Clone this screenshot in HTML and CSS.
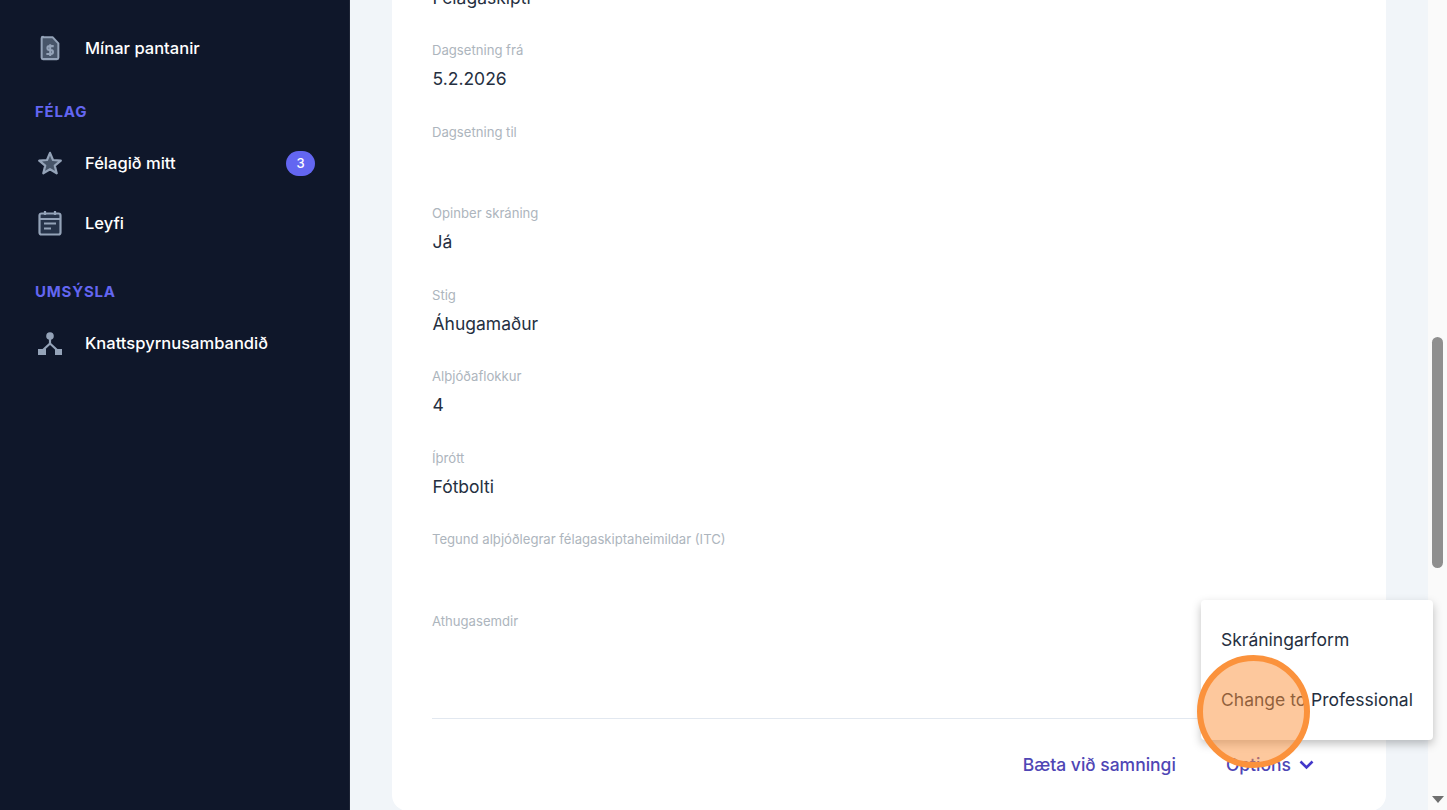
FILE: index.html
```html
<!DOCTYPE html>
<html lang="is">
<head>
    <meta charset="UTF-8">
    <meta name="viewport" content="width=device-width, initial-scale=1.0">
    <title>Félagaskipti</title>
    <link rel="stylesheet" href="styles.css">
</head>
<body>
    <!-- Hliðarvalmynd -->
    <nav class="sidebar">
        <a class="nav-item" href="#">
            <svg class="nav-icon" viewBox="0 0 24 28">
                <path class="duo" d="M4.500 2.500h10.500l6 6.500v15.500a1.500 1.500 0 0 1-1.500 1.500h-15a1.500 1.500 0 0 1-1.500-1.500v-21a1.500 1.500 0 0 1 1.500-1.500z"/>
                <path class="line" d="M16 12h-4.700a2 2 0 0 0 0 4.200h1.800a2 2 0 0 1 0 4.200h-5M12.200 10v12.500"/>
            </svg>
            <span>Mínar pantanir</span>
        </a>

        <h2 class="nav-heading first">Félag</h2>
        <a class="nav-item" href="#">
            <svg class="nav-icon" viewBox="0 0 24 24">
                <path class="duo" d="M12 1.800l3 7.200 7.800.6-6 5.100 1.900 7.600L12 18.200l-6.700 4.100 1.900-7.600-6-5.100L9 9z"/>
            </svg>
            <span>Félagið mitt</span>
            <span class="badge">3</span>
        </a>
        <a class="nav-item" href="#">
            <svg class="nav-icon" viewBox="0 0 24 26">
                <path class="duo dark" d="M3.500 3.500h17a2 2 0 0 1 2 2v17a2 2 0 0 1-2 2h-17a2 2 0 0 1-2-2v-17a2 2 0 0 1 2-2z"/>
                <path class="line" d="M2 9h20M7 1v4M17 1v4M6 13.500h12M6 18.500h7"/>
            </svg>
            <span>Leyfi</span>
        </a>

        <h2 class="nav-heading">Umsýsla</h2>
        <a class="nav-item" href="#">
            <svg class="nav-icon" viewBox="0 0 24 24">
                <circle class="solid" cx="12" cy="5" r="3.800"/>
                <rect class="solid" x="0" y="18" width="8" height="6"/>
                <rect class="solid" x="17" y="18" width="7" height="6"/>
                <path class="line" d="M12 8v4.500L5 19M12 12.500l7 6.500"/>
            </svg>
            <span>Knattspyrnusambandið</span>
        </a>
    </nav>

    <main class="content">
        <section class="card">
            <dl class="fields">
                <div class="field"><dt>Tegund</dt><dd>Félagaskipti</dd></div>
                <div class="field"><dt>Dagsetning frá</dt><dd>5.2.2026</dd></div>
                <div class="field"><dt>Dagsetning til</dt><dd></dd></div>
                <div class="field"><dt>Opinber skráning</dt><dd>Já</dd></div>
                <div class="field"><dt>Stig</dt><dd>Áhugamaður</dd></div>
                <div class="field"><dt>Alþjóðaflokkur</dt><dd>4</dd></div>
                <div class="field"><dt>Íþrótt</dt><dd>Fótbolti</dd></div>
                <div class="field"><dt>Tegund alþjóðlegrar félagaskiptaheimildar (ITC)</dt><dd></dd></div>
                <div class="field"><dt>Athugasemdir</dt><dd></dd></div>
            </dl>
            <div class="card-footer">
                <a class="action" href="#">Bæta við samningi</a>
                <a class="action options" href="#">Options
                    <svg class="chevron" viewBox="0 0 15 10"><path d="M1.500 1.500L7.500 7.500l6-6"/></svg>
                </a>
            </div>
        </section>
    </main>

    <div class="scrollbar">
        <div class="scroll-thumb"></div>
        <div class="scroll-arrow"></div>
    </div>

    <!-- Fellivalmynd yfir spjaldinu -->
    <div class="dropdown">
        <a href="#">Skráningarform</a>
        <a href="#">Change to Professional</a>
    </div>

    <div class="highlight"></div>
</body>
</html>
```

FILE: styles.css
```css
* {
    box-sizing: border-box;
}
html, body {
    height: 100%;
}
body {
    margin: 0;
    display: flex;
    height: 810px;
    overflow: hidden;
    background: #f1f5f9;
    color: #1f2937;
    font-family: 'Inter', 'Liberation Sans', sans-serif;
}
a {
    text-decoration: none;
}
/* Sidebar */
.sidebar {
    width: 350px;
    flex: none;
    background: #0f172a;
    padding: 18px 34px 0 38px;
    border-right: 1px solid #1e2536;
}
.nav-item {
    display: flex;
    align-items: center;
    height: 60px;
    color: #fff;
    font-size: 16.550px;
    font-weight: 500;
}
.nav-icon {
    width: 24px;
    height: 26px;
    margin-right: 23px;
    flex: none;
}
.duo {
    fill: #475569;
    stroke: #94a3b8;
    stroke-width: 2.200;
    stroke-linejoin: round;
}
.duo.dark {
    fill: #263349;
}
.solid {
    fill: #94a3b8;
}
.line {
    fill: none;
    stroke: #94a3b8;
    stroke-width: 2.200;
}
.nav-heading {
    margin: 29px 0 11px -3px;
    color: #6366f1;
    font-size: 15px;
    line-height: 20px;
    font-weight: 700;
    letter-spacing: 0.8px;
    text-transform: uppercase;
}
.nav-heading.first {
    margin-top: 24px;
}
.badge {
    margin-left: auto;
    width: 29px;
    height: 25px;
    border-radius: 13px;
    background: #6366f1;
    color: #fff;
    font-size: 13px;
    line-height: 25px;
    text-align: center;
}
/* Card */
.content {
    flex: 1;
    min-width: 0;
    height: 810px;
    padding: 0 42px;
    display: flex;
    flex-direction: column;
    justify-content: flex-end;
    overflow: hidden;
}
.card {
    flex: none;
    background: #fff;
    border-radius: 0 0 16px 16px;
    padding: 0 40px;
    margin-bottom: -1px;
}
.fields {
    margin: 0;
}
.field {
    height: 81.500px;
}
.field dt {
    color: #adb5bd;
    font-size: 13.120px;
    line-height: 18px;
}
.field dd {
    margin: 0;
    padding: 8px 0 0 0.500px;
    color: #252f3f;
    font-size: 17.500px;
    line-height: 24px;
    min-height: 32px;
}
.card-footer {
    border-top: 1px solid #e2e8f0;
    height: 93px;
    margin-top: 25px;
    padding: 0 32px 0 0;
    display: flex;
    align-items: flex-start;
    justify-content: flex-end;
    gap: 50px;
}
.action {
    margin-top: 34px;
    color: #4f46b5;
    font-size: 17.500px;
    line-height: 24px;
    font-weight: 500;
    display: flex;
    align-items: center;
}
.chevron {
    width: 15px;
    height: 10px;
    margin-left: 8px;
    fill: none;
    stroke: #4338ca;
    stroke-width: 2.600;
}
/* Scrollbar */
.scrollbar {
    width: 19px;
    flex: none;
    background: #fafafa;
    padding: 337px 4px 0 4px;
}
.scroll-thumb {
    height: 231px;
    border-radius: 6px;
    background: #8f8f8f;
}
.scroll-arrow {
    margin: 228px auto 0 auto;
    width: 0;
    height: 0;
    border-left: 6px solid transparent;
    border-right: 6px solid transparent;
    border-top: 7px solid #6f6f6f;
}
/* Dropdown */
.dropdown {
    position: absolute;
    left: 1201px;
    top: 600px;
    width: 232px;
    height: 140px;
    padding: 10px 0;
    background: #fff;
    border-radius: 4px;
    box-shadow: 0 4px 10px rgba(0,0,0,0.25);
}
.dropdown a {
    display: block;
    padding: 0 20px;
    height: 60px;
    line-height: 60px;
    color: #252f3f;
    font-size: 17.500px;
    white-space: nowrap;
}
.highlight {
    position: absolute;
    left: 1197px;
    top: 655px;
    width: 113px;
    height: 113px;
    border-radius: 50%;
    border: 6px solid #fb923c;
    background: rgba(251,146,60,0.5);
}
```
